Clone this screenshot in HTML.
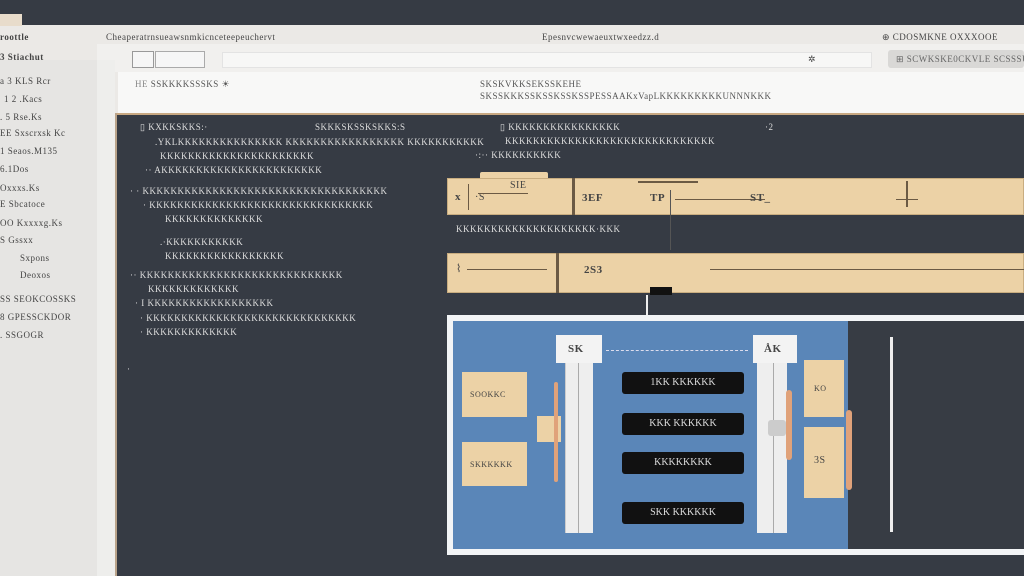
<!DOCTYPE html>
<html><head><style>
*{margin:0;padding:0;box-sizing:border-box}
body{width:1024px;height:576px;overflow:hidden;background:#363b44;font-family:"Liberation Serif",serif;position:relative}
.a{position:absolute}
.t{position:absolute;font-size:9px;white-space:nowrap;letter-spacing:0.5px}
.d{color:#444}
.w{color:#dedede}
.tan{background:#ecd2a6;border:1px solid #c9ad80}
.blk{background:#111;color:#ddd;border-radius:3px;font-size:10px;text-align:center;line-height:22px}
.ln{background:#6b5a44}
</style></head><body>
<div class="a" style="left:0;top:25px;width:1024px;height:90px;background:#ebe9e6"></div>
<div class="a" style="left:0;top:14px;width:22px;height:12px;background:#e8dccb"></div>
<div class="a" style="left:97px;top:44px;width:927px;height:28px;background:#f1f0ee"></div>
<div class="a" style="left:222px;top:52px;width:650px;height:16px;background:#f7f7f6;border:1px solid #e3e3e3"></div>
<div class="a" style="left:132px;top:51px;width:22px;height:17px;border:1px solid #999;background:#f6f6f6"></div>
<div class="a" style="left:155px;top:51px;width:50px;height:17px;border:1px solid #aaa;background:#f6f6f6"></div>
<div class="a" style="left:888px;top:50px;width:136px;height:18px;background:#d9d8d6;border-radius:3px"></div>
<div class="a" style="left:118px;top:72px;width:906px;height:43px;background:#f8f8f7;border-bottom:1px solid #ccc"></div>
<div class="a" style="left:0;top:60px;width:115px;height:516px;background:#e6e5e3"></div>
<div class="a" style="left:97px;top:60px;width:18px;height:516px;background:#eeeeec"></div>
<div class="t d" style="left:0;top:32px;font-weight:bold">roottle</div>
<div class="t d" style="left:0;top:52px;font-weight:bold">3 Stiachut</div>
<div class="t d" style="left:0;top:76px">a 3 KLS Rcr</div>
<div class="t d" style="left:4px;top:94px">1 2 .Kacs</div>
<div class="t d" style="left:0;top:112px">. 5 Rse.Ks</div>
<div class="t d" style="left:0;top:128px">EE Sxscrxsk Kc</div>
<div class="t d" style="left:0;top:146px">1 Seaos.M135</div>
<div class="t d" style="left:0;top:164px">6.1Dos</div>
<div class="t d" style="left:0;top:183px">Oxxxs.Ks</div>
<div class="t d" style="left:0;top:199px">E Sbcatoce</div>
<div class="t d" style="left:0;top:218px">OO Kxxxxg.Ks</div>
<div class="t d" style="left:0;top:235px">S Gssxx</div>
<div class="t d" style="left:20px;top:253px">Sxpons</div>
<div class="t d" style="left:20px;top:270px">Deoxos</div>
<div class="t d" style="left:0;top:294px">SS SEOKCOSSKS</div>
<div class="t d" style="left:0;top:312px">8 GPESSCKDOR</div>
<div class="t d" style="left:0;top:330px">. SSGOGR</div>
<div class="t d" style="left:106px;top:32px">Cheaperatrnsueawsnmkicnceteepeuchervt</div>
<div class="t d" style="left:542px;top:32px">Epesnvcwewaeuxtwxeedzz.d</div>
<div class="t d" style="left:882px;top:32px">⊕ CDOSMKNE  OXXXOOE</div>
<div class="t d" style="left:896px;top:54px;color:#666">⊞ SCWKSKE0CKVLE SCSSSUS</div>
<div class="t d" style="left:808px;top:54px">✲</div>
<div class="t d" style="left:135px;top:79px;color:#888">HE <span style="color:#555">SSKKKKSSSKS ☀</span></div>
<div class="t d" style="left:480px;top:79px;color:#555">SKSKVKKSEKSSKEHE</div>
<div class="t d" style="left:480px;top:91px;color:#555">SKSSKKKSSKSSKSSKSSPESSAAKxVapLKKKKKKKKKUNNNKKK</div>
<div class="a" style="left:115px;top:113px;width:909px;height:2px;background:#c8a882"></div>
<div class="a" style="left:115px;top:113px;width:2px;height:463px;background:#b9a38a"></div>
<div class="t w" style="left:140px;top:122px">▯ KXKKSKKS:·</div>
<div class="t w" style="left:315px;top:122px">SKKKSKSSKSKKS:S</div>
<div class="t w" style="left:155px;top:137px">.YKLKKKKKKKKKKKKKKK KKKKKKKKKKKKKKKKK KKKKKKKKKKK</div>
<div class="t w" style="left:160px;top:151px">KKKKKKKKKKKKKKKKKKKKKK</div>
<div class="t w" style="left:145px;top:165px">·· AKKKKKKKKKKKKKKKKKKKKKKK</div>
<div class="t w" style="left:130px;top:186px">· · KKKKKKKKKKKKKKKKKKKKKKKKKKKKKKKKKKK</div>
<div class="t w" style="left:143px;top:200px">· KKKKKKKKKKKKKKKKKKKKKKKKKKKKKKKK</div>
<div class="t w" style="left:165px;top:214px">KKKKKKKKKKKKKK</div>
<div class="t w" style="left:160px;top:237px">.·KKKKKKKKKKK</div>
<div class="t w" style="left:165px;top:251px">KKKKKKKKKKKKKKKKK</div>
<div class="t w" style="left:130px;top:270px">·· KKKKKKKKKKKKKKKKKKKKKKKKKKKKK</div>
<div class="t w" style="left:148px;top:284px">KKKKKKKKKKKKK</div>
<div class="t w" style="left:135px;top:298px">· I KKKKKKKKKKKKKKKKKK</div>
<div class="t w" style="left:140px;top:313px">· KKKKKKKKKKKKKKKKKKKKKKKKKKKKKK</div>
<div class="t w" style="left:140px;top:327px">· KKKKKKKKKKKKK</div>
<div class="t w" style="left:127px;top:364px">·</div>
<div class="t w" style="left:500px;top:122px">▯ KKKKKKKKKKKKKKKK</div>
<div class="t w" style="left:505px;top:136px">KKKKKKKKKKKKKKKKKKKKKKKKKKKKKK</div>
<div class="t w" style="left:475px;top:150px">·:·· KKKKKKKKKK</div>
<div class="t w" style="left:765px;top:122px">·2</div>
<div class="a" style="left:480px;top:172px;width:68px;height:8px;background:#ecd2a6;border-radius:2px 2px 0 0"></div>
<div class="a tan" style="left:447px;top:178px;width:577px;height:37px"></div>
<div class="a" style="left:572px;top:178px;width:3px;height:37px;background:#6b5a44"></div>
<div class="a" style="left:468px;top:184px;width:1px;height:26px;background:#6b5a44"></div>
<div class="t d" style="left:455px;top:191px;font-size:11px;font-weight:bold">x</div>
<div class="t d" style="left:475px;top:192px;font-size:10px">·S</div>
<div class="t d" style="left:510px;top:180px;font-size:10px">SIE</div>
<div class="a ln" style="left:478px;top:193px;width:50px;height:1px"></div>
<div class="t d" style="left:582px;top:192px;font-size:11px;font-weight:bold">3EF</div>
<div class="t d" style="left:650px;top:192px;font-size:11px;font-weight:bold">TP</div>
<div class="a ln" style="left:638px;top:181px;width:60px;height:2px"></div>
<div class="a ln" style="left:670px;top:190px;width:1px;height:60px;background:#555"></div>
<div class="a ln" style="left:675px;top:199px;width:90px;height:1px"></div>
<div class="t d" style="left:750px;top:192px;font-size:11px;font-weight:bold">ST_</div>
<div class="a ln" style="left:906px;top:181px;width:2px;height:26px"></div>
<div class="a ln" style="left:896px;top:199px;width:22px;height:1px"></div>
<div class="t w" style="left:456px;top:224px">KKKKKKKKKKKKKKKKKKKK·KKK</div>
<div class="a tan" style="left:447px;top:253px;width:577px;height:40px"></div>
<div class="a" style="left:556px;top:253px;width:3px;height:40px;background:#6b5a44"></div>
<div class="t d" style="left:456px;top:262px;font-size:11px">⌇</div>
<div class="a ln" style="left:467px;top:269px;width:80px;height:1px"></div>
<div class="t d" style="left:584px;top:264px;font-size:11px;font-weight:bold">2S3</div>
<div class="a ln" style="left:710px;top:269px;width:314px;height:1px"></div>
<div class="a" style="left:650px;top:287px;width:22px;height:8px;background:#111"></div>
<div class="a" style="left:646px;top:295px;width:2px;height:20px;background:#eee"></div>
<div class="a" style="left:447px;top:315px;width:577px;height:240px;background:#f2f4f6"></div>
<div class="a" style="left:453px;top:321px;width:395px;height:228px;background:#5a86b8"></div>
<div class="a" style="left:848px;top:321px;width:176px;height:228px;background:#373c44"></div>
<div class="a" style="left:890px;top:337px;width:3px;height:195px;background:#eee"></div>
<div class="a" style="left:556px;top:335px;width:46px;height:28px;background:#f3f3f3"></div>
<div class="t d" style="left:568px;top:343px;font-size:11px;font-weight:bold">SK</div>
<div class="a" style="left:565px;top:363px;width:28px;height:170px;background:#eeeeee;border-left:1px solid #ccc"></div>
<div class="a" style="left:578px;top:363px;width:1px;height:170px;background:#aaa"></div>
<div class="a" style="left:753px;top:335px;width:44px;height:28px;background:#f3f3f3"></div>
<div class="t d" style="left:764px;top:343px;font-size:11px;font-weight:bold">ÅK</div>
<div class="a" style="left:757px;top:363px;width:30px;height:170px;background:#eeeeee"></div>
<div class="a" style="left:773px;top:363px;width:1px;height:170px;background:#aaa"></div>
<div class="a" style="left:606px;top:350px;width:142px;border-top:1px dashed #dde"></div>
<div class="a" style="left:462px;top:372px;width:65px;height:45px;background:#ecd2a6"></div>
<div class="t d" style="left:470px;top:390px;font-size:8px">SOOKKC</div>
<div class="a" style="left:462px;top:442px;width:65px;height:44px;background:#ecd2a6"></div>
<div class="t d" style="left:470px;top:460px;font-size:8px">SKKKKKK</div>
<div class="a" style="left:537px;top:416px;width:24px;height:26px;background:#ecd2a6"></div>
<div class="a" style="left:554px;top:382px;width:4px;height:100px;background:#e0a27a;border-radius:2px"></div>
<div class="a" style="left:804px;top:360px;width:40px;height:57px;background:#ecd2a6"></div>
<div class="t d" style="left:814px;top:384px;font-size:8px">KO</div>
<div class="a" style="left:804px;top:427px;width:40px;height:71px;background:#ecd2a6"></div>
<div class="t d" style="left:814px;top:455px;font-size:10px">3S</div>
<div class="a" style="left:786px;top:390px;width:6px;height:70px;background:#e0a27a;border-radius:3px"></div>
<div class="a" style="left:768px;top:420px;width:18px;height:16px;background:#ccc;border-radius:3px"></div>
<div class="a" style="left:846px;top:410px;width:6px;height:80px;background:#e0a27a;border-radius:3px"></div>
<div class="a blk" style="left:622px;top:372px;width:122px;height:22px">1KK  KKKKKK</div>
<div class="a blk" style="left:622px;top:413px;width:122px;height:22px">KKK  KKKKKK</div>
<div class="a blk" style="left:622px;top:452px;width:122px;height:22px">KKKKKKKK</div>
<div class="a blk" style="left:622px;top:502px;width:122px;height:22px">SKK  KKKKKK</div>
</body></html>
